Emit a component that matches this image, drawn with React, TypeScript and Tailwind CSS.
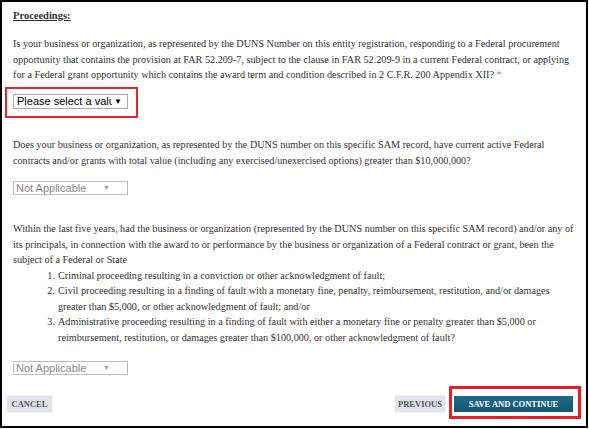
import type { ReactNode } from 'react';

/* ------------------------------------------------------------------ */
/*  Small building blocks                                              */
/* ------------------------------------------------------------------ */

function Line({ children }: { children: ReactNode }) {
  return <div className="whitespace-nowrap">{children}</div>;
}

function Para({ children, className = '' }: { children: ReactNode; className?: string }) {
  return (
    <div
      className={`text-[10.2px] leading-[15.5px] text-[#333] [font-family:'Liberation_Serif',Georgia,serif] ${className}`}
    >
      {children}
    </div>
  );
}

function ListItem({ n, lines }: { n: string; lines: string[] }) {
  return (
    <div className="flex">
      <div className="w-[45px] shrink-0 pr-[3px] text-right">{n}</div>
      <div>
        {lines.map((l) => (
          <Line key={l}>{l}</Line>
        ))}
      </div>
    </div>
  );
}

function DisabledSelect({ className = '' }: { className?: string }) {
  return (
    <div
      className={`flex h-[14px] w-[115px] items-center justify-between border border-[#bdbdbd] bg-white pl-[2px] pr-[17px] text-[11px] text-[#8a8a8a] [font-family:'Liberation_Sans',Arial,sans-serif] ${className}`}
    >
      <span>Not Applicable</span>
      <span className="text-[7px] text-[#9a9a9a]">▼</span>
    </div>
  );
}

function GreyButton({ label, className = '' }: { label: string; className?: string }) {
  return (
    <div
      className={`flex h-[16px] items-center justify-center bg-[#e4e3ea] text-[8.5px] font-bold text-[#55565d] shadow-[0_0_1px_#b9b8c2] [font-family:'Liberation_Serif',Georgia,serif] ${className}`}
    >
      {label}
    </div>
  );
}

/* ------------------------------------------------------------------ */
/*  App                                                                */
/* ------------------------------------------------------------------ */

export default function App() {
  return (
    <div className="h-[428px] w-[588px] overflow-hidden border-2 border-black bg-white">
      <div className="pl-[11px]">
        <div className="pt-[6px] text-[10.5px] font-bold leading-[15px] text-[#333] underline [font-family:'Liberation_Serif',Georgia,serif]">
          Proceedings:
        </div>

        <Para className="mt-[13px]">
          <Line>
            Is your business or organization, as represented by the DUNS Number on this entity registration, responding to a Federal procurement
          </Line>
          <Line>
            opportunity that contains the provision at FAR 52.209-7, subject to the clause in FAR 52.209-9 in a current Federal contract, or applying
          </Line>
          <Line>
            for a Federal grant opportunity which contains the award term and condition described in 2 C.F.R. 200 Appendix XII?{' '}
            <span className="text-[#e8743b]">*</span>
          </Line>
        </Para>

        <div className="ml-[-8px] mt-[4.5px] h-[31px] w-[133px] border-2 border-[#e8262b] pl-[6px] pt-[5px]">
          <div className="flex h-[15px] w-[115px] items-center overflow-hidden border border-[#a9a9a9] bg-white pl-[3px] pr-[5px] text-[11px] text-black [font-family:'Liberation_Sans',Arial,sans-serif]">
            <span className="min-w-0 flex-1 overflow-hidden whitespace-nowrap">Please select a value</span>
            <span className="ml-[2px] text-[8px]">▼</span>
          </div>
        </div>

        <Para className="mt-[19px]">
          <Line>
            Does your business or organization, as represented by the DUNS number on this specific SAM record, have current active Federal
          </Line>
          <Line>
            contracts and/or grants with total value (including any exercised/unexercised options) greater than $10,000,000?
          </Line>
        </Para>

        <DisabledSelect className="mt-[13px]" />

        <Para className="mt-[26px]">
          <Line>
            Within the last five years, had the business or organization (represented by the DUNS number on this specific SAM record) and/or any of
          </Line>
          <Line>
            its principals, in connection with the award to or performance by the business or organization of a Federal contract or grant, been the
          </Line>
          <Line>subject of a Federal or State</Line>
          <ListItem
            n="1."
            lines={['Criminal proceeding resulting in a conviction or other acknowledgment of fault;']}
          />
          <ListItem
            n="2."
            lines={[
              'Civil proceeding resulting in a finding of fault with a monetary fine, penalty, reimbursement, restitution, and/or damages',
              'greater than $5,000, or other acknowledgment of fault; and/or',
            ]}
          />
          <ListItem
            n="3."
            lines={[
              'Administrative proceeding resulting in a finding of fault with either a monetary fine or penalty greater than $5,000 or',
              'reimbursement, restitution, or damages greater than $100,000, or other acknowledgment of fault?',
            ]}
          />
        </Para>

        <DisabledSelect className="mt-[16px]" />
      </div>

      <div className="mt-[11px] flex items-center justify-between pl-[5px] pr-[5px]">
        <GreyButton label="CANCEL" className="mt-[3px] w-[45px]" />
        <div className="flex items-center">
          <GreyButton label="PREVIOUS" className="mr-[4px] mt-[3px] w-[50px]" />
          <div className="h-[33px] w-[132px] border-[3px] border-[#ee1c25] pl-[2px] pt-[7px]">
            <div className="flex h-[16px] w-[119px] items-center justify-center bg-[linear-gradient(#1e6a8a,#155573)] text-[8.5px] font-bold text-white [font-family:'Liberation_Serif',Georgia,serif]">
              SAVE AND CONTINUE
            </div>
          </div>
        </div>
      </div>
    </div>
  );
}
